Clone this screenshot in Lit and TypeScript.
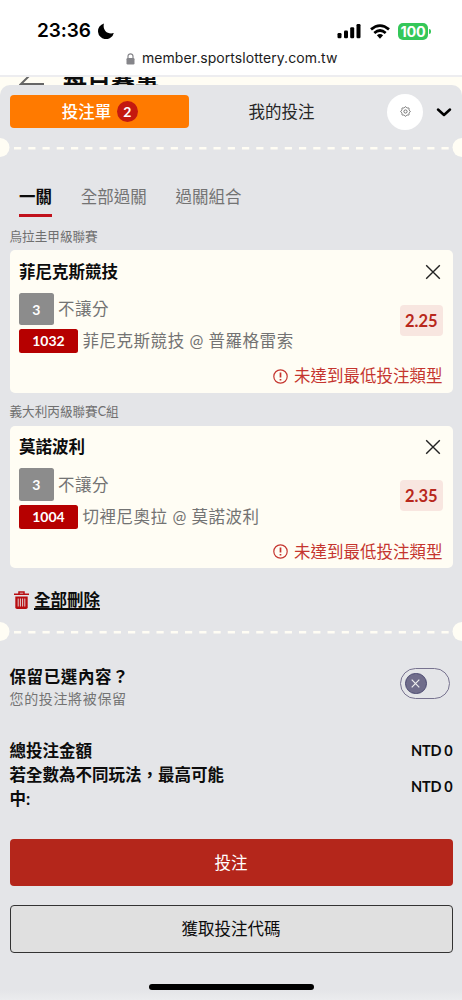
import { LitElement, html, css, svg } from "lit";
import { customElement, property } from "lit/decorators.js";

const closeIcon = html`<svg class="close" width="16" height="16" viewBox="0 0 16 16">
  <path d="M1.2 1.2 14.8 14.8M14.8 1.2 1.2 14.8" stroke="#222" stroke-width="1.4" fill="none" />
</svg>`;

@customElement("status-bar")
class StatusBar extends LitElement {
  static styles = css`
    :host { display: block; height: 75px; background: #fff; border-bottom: 2px solid #ededf0; font-family: Inter, "Noto Sans CJK TC", sans-serif; color: #000; }
    .top { display: flex; align-items: center; height: 30px; padding: 16px 31px 0 37px; }
    .time { font-size: 19px; line-height: 30px; font-weight: 600; letter-spacing: -0.1px; width: 55px; white-space: nowrap; }
    .moon { margin-left: 6px; }
    .icons { margin-left: auto; display: flex; align-items: center; }
    .wifi { margin: 0 8px 0 9px; }
    .level { width: 30px; height: 17px; border-radius: 5px; background: #34c759; color: #fff; font-size: 14.5px; line-height: 17px; font-weight: 700; text-align: center; letter-spacing: -0.2px; }
    .nub { width: 2px; height: 5px; margin-left: 1px; border-radius: 0 2px 2px 0; background: #34c759; }
    .address { display: flex; align-items: center; justify-content: flex-start; height: 24px; padding-left: 126px; font-size: 14px; line-height: 24px; color: #1b1b1c; white-space: nowrap; letter-spacing: 0.06px; }
    .lock { margin: 1px 7px 0 0; }
  `;
  render() {
    return html`
      <div class="top">
        <span class="time">23:36</span>
        <svg class="moon" width="16" height="16" viewBox="0 0 16 16">
          <path d="M6 .4C4.300 6 8.500 12 15.800 10A8 8 0 1 1 6 .400Z" />
        </svg>
        <div class="icons">
          <svg width="24" height="16" viewBox="0 0 24 16">
            <rect x="0.500" y="10" width="4" height="5.300" rx="1.200" />
            <rect x="7" y="7.500" width="4" height="7.800" rx="1.200" />
            <rect x="13.200" y="4.300" width="4" height="11" rx="1.200" />
            <rect x="19.500" y="1" width="4" height="14.300" rx="1.200" />
          </svg>
          <svg class="wifi" width="20" height="15" viewBox="0 0 20 15">
            <g fill="none" stroke="#000" stroke-width="2.700">
              <path d="M1 5.400Q10-2.300 19 5.400" />
              <path d="M4.300 9Q10 4 15.700 9" />
            </g>
            <path d="M6.900 11.300Q10 8.900 13.100 11.300L10 14.700Z" />
          </svg>
          <div class="level">100</div>
          <div class="nub"></div>
        </div>
      </div>
      <div class="address">
        <svg class="lock" width="9" height="12" viewBox="0 0 9 12">
          <rect x="0.500" y="5" width="8" height="6.500" rx="1.200" fill="#85858a" />
          <path d="M2 5.500V3.300a2.500 2.500 0 0 1 5 0v2.200" fill="none" stroke="#85858a" stroke-width="1.200" />
        </svg>
        <span>member.sportslottery.com.tw</span>
      </div>
    `;
  }
}

@customElement("ticket-divider")
class TicketDivider extends LitElement {
  static styles = css`
    :host { display: block; height: 19px; }
    .line { display: block; }
  `;
  render() {
    return html`<svg class="line" width="462" height="19" viewBox="0 0 462 19">
      <circle cx="0" cy="9.500" r="9.500" fill="#fffdf4" />
      <circle cx="462" cy="9.500" r="9.500" fill="#fffdf4" />
      <path d="M14 10.250H449" stroke="#fffdf4" stroke-width="2.500" stroke-dasharray="7.200 7.050" />
    </svg>`;
  }
}

@customElement("bet-card")
class BetCard extends LitElement {
  @property() name = "";
  @property() code = "";
  @property() match = "";
  @property() odds = "";
  static styles = css`
    :host { display: block; }
    .card { box-sizing: border-box; height: 142.700px; margin: 0 9.500px; padding: 9.500px 10px 0 9.500px; border-radius: 5px; background: #fffdf4; }
    .head { display: flex; align-items: center; justify-content: space-between; height: 24px; padding-right: 2px; font-size: 16.500px; font-weight: 700; color: #0c0c0c; }
    .body { display: flex; justify-content: space-between; align-items: center; height: 61px; margin-top: 9px; }
    .lines { display: flex; flex-direction: column; gap: 4px; }
    .row { display: flex; align-items: center; gap: 4.500px; font-size: 16.500px; letter-spacing: 0.530px; color: #737373; white-space: nowrap; }
    .pick { width: 34.500px; height: 32.500px; line-height: 33px; border-radius: 2.500px; background: #8c8c8c; }
    .code { width: 59px; height: 24px; line-height: 24px; border-radius: 2.500px; background: #b60000; }
    .tag { color: #fff; text-align: center; font-size: 14px; font-weight: 700; letter-spacing: 0; }
    .odds { width: 42.300px; height: 31px; line-height: 32px; margin-top: -5.500px; border-radius: 4px; background: #f8e6e0; color: #b8281c; font-size: 16.500px; font-weight: 700; text-align: center; }
    .warn { display: flex; align-items: center; justify-content: flex-end; gap: 6px; height: 24px; margin-top: 10.500px; font-size: 16.500px; color: #c5352f; }
  `;
  render() {
    return html`<div class="card">
      <div class="head"><span>${this.name}</span>${closeIcon}</div>
      <div class="body">
        <div class="lines">
          <div class="row"><span class="tag pick">3</span><span>不讓分</span></div>
          <div class="row"><span class="tag code">${this.code}</span><span>${this.match}</span></div>
        </div>
        <span class="odds">${this.odds}</span>
      </div>
      <div class="warn">
        <svg width="15" height="15" viewBox="0 0 15 15">
          <circle cx="7.500" cy="7.500" r="6.700" fill="none" stroke="#c5352f" stroke-width="1.200" />
          <path d="M7.500 3.500V8.600M7.500 9.900V11.600" stroke="#c5352f" stroke-width="1.700" />
        </svg>
        <span>未達到最低投注類型</span>
      </div>
    </div>`;
  }
}

@customElement("app-root")
class AppRoot extends LitElement {
  static styles = css`
    :host { display: block; width: 462px; height: 1000px; overflow: hidden; background: #fffdf4; font-family: Lato, "Noto Sans CJK TC", sans-serif; font-size: 16.500px; line-height: 24px; color: #0c0c0c; }
    .behind { display: flex; height: 8px; overflow: hidden; padding-left: 19px; }
    .behind-title { margin: -7px 0 0 18px; font-size: 24px; line-height: 24px; font-weight: 700; white-space: nowrap; }
    .panel { box-sizing: border-box; height: 915px; border-radius: 10px 10px 0 0; background: linear-gradient(#e4e5e8 0 905px, #ebecee 915px); }
    .header { display: flex; align-items: center; height: 53px; }
    .slip { display: flex; align-items: center; justify-content: center; gap: 5.500px; width: 179.500px; height: 33px; margin-left: 9.500px; padding-left: 1px; box-sizing: border-box; border-radius: 4px; background: #ff7a00; color: #fff; font-weight: 500; }
    .count { width: 21px; height: 21px; border-radius: 50%; background: #c4190f; font-size: 14px; line-height: 21px; font-weight: 700; text-align: center; }
    .mine { width: 185px; text-align: center; color: #262626; }
    .gear { display: grid; place-items: center; width: 36px; height: 36px; margin-left: 13px; border-radius: 50%; background: #fff; }
    .chevron { margin-left: 13px; }
    .tabs { display: flex; gap: 28.700px; height: 34px; margin-top: 25px; padding: 3px 0 0 19px; color: #737373; line-height: 24px; box-sizing: border-box; }
    .tab { box-sizing: border-box; height: 31.500px; }
    .active { color: #0c0c0c; font-weight: 700; border-bottom: 3.500px solid #c1121c; }
    .league { display: flex; align-items: center; height: 33px; padding: 6px 9.500px 0; font-size: 12.600px; color: #6f6f6f; box-sizing: border-box; }
    .first { height: 34px; padding-top: 7px; }
    .remove { display: flex; align-items: center; gap: 5px; height: 53.500px; padding: 9px 0 0 14px; box-sizing: border-box; font-weight: 700; }
    .remove-text { text-decoration: underline; text-decoration-thickness: 1.500px; text-underline-offset: 2px; }
    .keep { display: flex; justify-content: space-between; align-items: center; height: 46px; padding: 0 12px 0 9.500px; margin-top: 23px; }
    .keep-title { font-weight: 700; letter-spacing: 0.600px; }
    .keep-note { font-size: 14px; line-height: 20px; letter-spacing: 0.650px; color: #737373; }
    .toggle { display: flex; align-items: center; box-sizing: border-box; width: 50px; height: 31px; padding-left: 4px; border: 1px solid #77728f; border-radius: 16px; margin-top: -7px; }
    .knob { display: grid; place-items: center; box-sizing: border-box; width: 21.500px; height: 21.500px; border: 1px solid #4b4970; border-radius: 50%; background: #706d8b; }
    .totals { display: flex; flex-direction: column; padding: 0 9.500px; margin-top: 29.500px; font-weight: 700; }
    .total { display: flex; justify-content: space-between; align-items: center; }
    .label { width: 222px; }
    .amount { font-size: 14.500px; letter-spacing: -0.150px; word-spacing: -0.500px; }
    .button { display: flex; align-items: center; justify-content: center; box-sizing: border-box; height: 47.500px; margin: 0 9.500px; border-radius: 4px; }
    .primary { margin-top: 27.500px; background: #b4261b; color: #fff; }
    .secondary { margin-top: 19px; border: 1.400px solid #333; background: #e0e0e0; }
    .home { width: 165px; height: 6px; margin: 31px auto 0; border-radius: 3px; background: #000; }
  `;
  render() {
    const teeth = Array.from({ length: 49 }, (_, i) => {
      const a = (i / 48) * Math.PI * 2;
      const r = 4.3 + 0.5 * Math.cos(8 * a);
      return `${(5.5 + r * Math.cos(a)).toFixed(2)},${(5.5 + r * Math.sin(a)).toFixed(2)}`;
    }).join(" ");
    return html`
      <status-bar></status-bar>
      <div class="behind">
        <svg width="26" height="8" viewBox="0 0 26 8">
          <path d="M10-1 2 7H25" fill="none" stroke="#666" stroke-width="2" />
        </svg>
        <span class="behind-title">每日賽事</span>
      </div>
      <div class="panel">
        <div class="header">
          <div class="slip"><span>投注單</span><span class="count">2</span></div>
          <div class="mine">我的投注</div>
          <div class="gear">
            <svg width="11" height="11" viewBox="0 0 11 11" fill="none" stroke="#555" stroke-width="0.800">
              ${svg`<polygon points=${teeth} />`}
              <circle cx="5.500" cy="5.500" r="1.600" />
            </svg>
          </div>
          <svg class="chevron" width="16" height="10" viewBox="0 0 16 10">
            <path d="M2 2.500 8 8 14 2.500" fill="none" stroke="#000" stroke-width="2.500" stroke-linecap="round" stroke-linejoin="round" />
          </svg>
        </div>
        <ticket-divider></ticket-divider>
        <div class="tabs">
          <span class="tab active">一關</span><span class="tab">全部過關</span><span class="tab">過關組合</span>
        </div>
        <div class="league first">烏拉圭甲級聯賽</div>
        <bet-card name="菲尼克斯競技" code="1032" match="菲尼克斯競技 @ 普羅格雷索" odds="2.25"></bet-card>
        <div class="league">義大利丙級聯賽C組</div>
        <bet-card name="莫諾波利" code="1004" match="切裡尼奧拉 @ 莫諾波利" odds="2.35"></bet-card>
        <div class="remove">
          <svg width="15" height="18" viewBox="0 0 15 18">
            <path d="M5 3V1H10V3M0 3.300H15" fill="none" stroke="#b80d10" stroke-width="1.500" />
            <path d="M1.300 5.500H13.700V16.200Q13.700 18 12 18H3Q1.300 18 1.300 16.200Z" fill="#b80d10" />
            <path d="M4.200 7.500V15.500M6.400 7.500V15.500M8.600 7.500V15.500M10.800 7.500V15.500" stroke="#e4e5e8" stroke-width="0.900" />
          </svg>
          <span class="remove-text">全部刪除</span>
        </div>
        <ticket-divider></ticket-divider>
        <div class="keep">
          <div>
            <div class="keep-title">保留已選內容？</div>
            <div class="keep-note">您的投注將被保留</div>
          </div>
          <div class="toggle"><span class="knob">
            <svg width="9" height="9" viewBox="0 0 9 9"><path d="M.7.7 8.300 8.300M8.300.7.7 8.300" stroke="#eee" stroke-width="1.200" /></svg>
          </span></div>
        </div>
        <div class="totals">
          <div class="total"><span class="label">總投注金額</span><span class="amount">NTD 0</span></div>
          <div class="total"><span class="label">若全數為不同玩法，最高可能中:</span><span class="amount">NTD 0</span></div>
        </div>
        <div class="button primary">投注</div>
        <div class="button secondary">獲取投注代碼</div>
        <div class="home"></div>
      </div>
    `;
  }
}
